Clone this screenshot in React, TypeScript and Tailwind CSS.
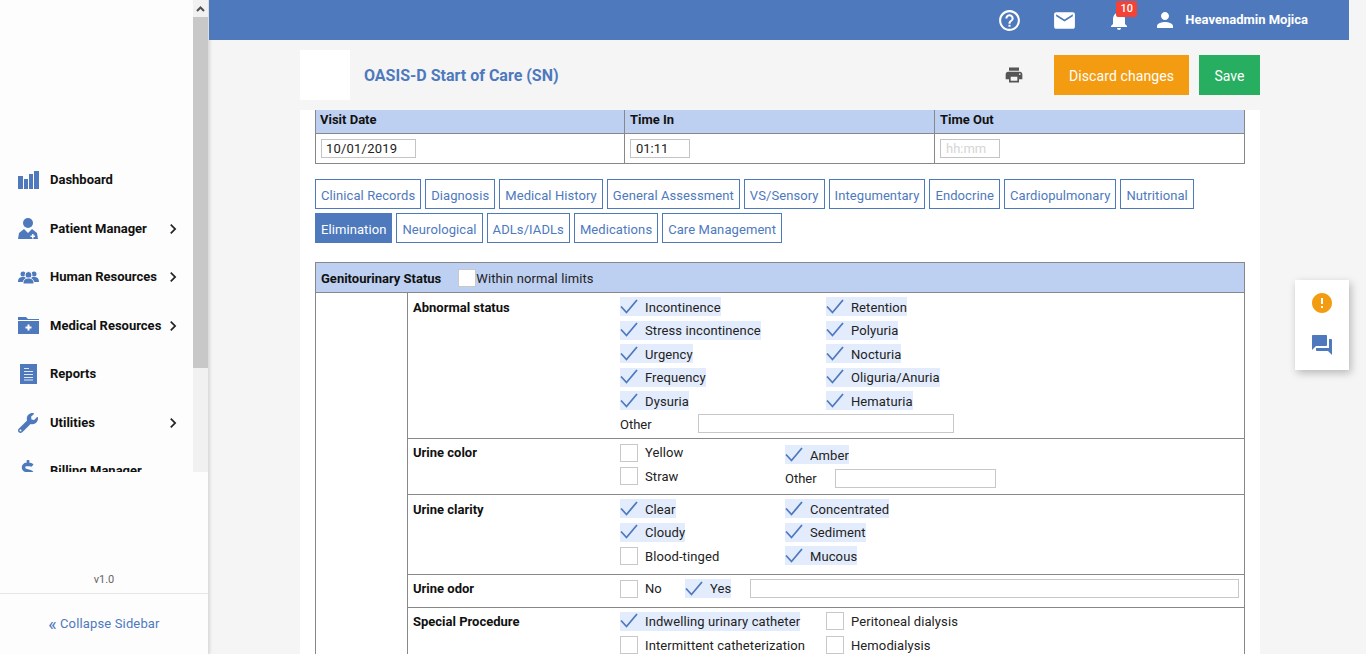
import { FaDollarSign, FaWrench } from "react-icons/fa";
import {
  MdChevronRight,
  MdEmail,
  MdError,
  MdHelpOutline,
  MdNotifications,
  MdPerson,
  MdPrint,
  MdQuestionAnswer,
} from "react-icons/md";
import type { ReactNode } from "react";

function BarsIcon() {
  return (
    <svg width="21" height="18" viewBox="0 0 21 18" fill="#4e79bd">
      <rect x="0" y="5" width="5" height="13" />
      <rect x="6" y="8" width="4" height="10" />
      <rect x="11" y="3" width="4" height="15" />
      <rect x="16" y="0" width="5" height="18" />
    </svg>
  );
}

function DoctorIcon() {
  return (
    <svg width="20" height="21" viewBox="0 0 20 21" fill="#4e79bd">
      <circle cx="10" cy="5" r="5" />
      <path d="M6 11l4 4 4-4 5 4 1 6H0l1-6z" />
      <path d="M14 16h1.500v1.500H17V19h-1.500v1.500H14V19h-1.500v-1.500H14z" fill="#fff" />
    </svg>
  );
}

function TeamIcon() {
  return (
    <svg width="21" height="13" viewBox="0 0 21 13" fill="#4e79bd">
      <circle cx="5" cy="3" r="2.500" />
      <circle cx="16" cy="3" r="2.500" />
      <path d="M0 11c0-4 2-5 5-5s5 1 5 5zM11 11c0-4 2-5 5-5s5 1 5 5z" />
      <circle cx="10.500" cy="4" r="3.500" stroke="#fff" />
      <path d="M5 13c0-4 2-6 5.500-6S16 9 16 13z" stroke="#fff" />
    </svg>
  );
}

function FolderIcon() {
  return (
    <svg width="21" height="17" viewBox="0 0 21 17" fill="#4e79bd">
      <path d="M0 0h8l2 2h11v1H0zM0 4h21v13H0z" />
      <path d="M9.500 7.500h2v2h2v2h-2v2h-2v-2h-2v-2h2z" fill="#fff" />
    </svg>
  );
}

function ReportIcon() {
  return (
    <svg width="17" height="20" viewBox="0 0 17 20">
      <rect width="17" height="20" fill="#4e79bd" />
      <path d="M4 4.500h5M4 7.500h9M4 10.500h9M4 13.500h9M4 16h9" stroke="#dfe8f6" strokeWidth="1" />
    </svg>
  );
}

const navItems: { label: string; icon: ReactNode; arrow?: boolean }[] = [
  { label: "Dashboard", icon: <BarsIcon /> },
  { label: "Patient Manager", icon: <DoctorIcon />, arrow: true },
  { label: "Human Resources", icon: <TeamIcon />, arrow: true },
  { label: "Medical Resources", icon: <FolderIcon />, arrow: true },
  { label: "Reports", icon: <ReportIcon /> },
  { label: "Utilities", icon: <FaWrench size={20} />, arrow: true },
  { label: "Billing Manager", icon: <FaDollarSign size={22} /> },
];

const tabsRowOne = [
  "Clinical Records",
  "Diagnosis",
  "Medical History",
  "General Assessment",
  "VS/Sensory",
  "Integumentary",
  "Endocrine",
  "Cardiopulmonary",
  "Nutritional",
];

const tabsRowTwo = ["Elimination", "Neurological", "ADLs/IADLs", "Medications", "Care Management"];

function Sidebar() {
  return (
    <aside className="flex h-full w-[209px] shrink-0 flex-col border-r border-[#dddddd] bg-[#fdfdfd] shadow-[1px_0_3px_rgba(0,0,0,0.12)]">
      <div className="flex h-[472px] shrink-0">
        <nav className="w-[193px] overflow-hidden pt-[155.8px]">
          {navItems.map((item) => (
            <div key={item.label} className="flex h-[48.5px] items-center">
              <div className="flex w-[50px] shrink-0 justify-center pl-[8px] pr-[2px] text-[#4e79bd]">{item.icon}</div>
              <span className="flex-1 whitespace-nowrap text-[13px] font-bold text-[#111111]">{item.label}</span>
              {item.arrow && <MdChevronRight size={20} className="mr-[10px] shrink-0 text-[#222222]" />}
            </div>
          ))}
        </nav>
        <div className="flex w-[15px] shrink-0 flex-col bg-[#f1f1f1]">
          <div className="flex h-[17px] items-center justify-center text-[#505050]">
            <svg width="9" height="6" viewBox="0 0 9 6" fill="none" stroke="currentColor" strokeWidth="2">
              <path d="M1 5l3.500-3.500L8 5" />
            </svg>
          </div>
          <div className="h-[351px] bg-[#c8c8c8]" />
        </div>
      </div>
      <div className="flex flex-1 flex-col">
        <div className="mt-[101px] text-center text-[11px] leading-[14px] text-[#666666]">v1.0</div>
        <div className="mt-[6px] flex flex-1 items-center justify-center border-t border-[#e6e6e6] pb-[1px] text-[13px] tracking-[0.15px] text-[#4e79bd]">
          <span className="mr-[3px] text-[18px] leading-none">«</span>Collapse Sidebar
        </div>
      </div>
    </aside>
  );
}

function TopBar() {
  return (
    <header className="flex h-10 w-[1140px] shrink-0 items-center bg-[#4e79bd] text-white">
      <div className="ml-auto flex items-center">
        <MdHelpOutline size={25} />
        <MdEmail size={25} className="ml-[30px]" />
        <div className="relative ml-[30px] h-[24px] w-[24px]">
          <MdNotifications size={24} />
          <span className="absolute left-[9px] top-[-7px] flex h-[16px] w-[21px] items-center justify-center rounded-[2px] bg-[#f44336] text-[11px] font-medium">
            10
          </span>
        </div>
        <MdPerson size={24} className="ml-[22px]" />
        <span className="ml-[8px] mr-[41px] text-[13px] font-bold">Heavenadmin Mojica</span>
      </div>
    </header>
  );
}

function Check() {
  return (
    <svg width="18" height="18" viewBox="0 0 18 18" fill="none" stroke="#4e79bd" strokeWidth="1.800" className="shrink-0">
      <path d="M1 8.500l5.500 6L17 2" />
    </svg>
  );
}

function Option({ label, checked, width }: { label: string; checked?: boolean; width?: string }) {
  return (
    <div className={`flex h-[19px] items-center ${width ?? ""}`}>
      <div className={`flex h-[19px] items-center text-[13px] tracking-[0.1px] text-[#222222] ${checked ? "bg-[#e3ecfd]" : ""}`}>
        {checked ? <Check /> : <div className="h-[18px] w-[18px] shrink-0 border border-[#c8c8c8] bg-white" />}
        <span className="ml-[7px] whitespace-nowrap pt-[1px]">{label}</span>
      </div>
    </div>
  );
}

function OtherField({ inputClass, gapClass }: { inputClass: string; gapClass: string }) {
  return (
    <div className="flex items-center text-[13px] text-[#222222]">
      <span className={`pt-[2px] leading-[16px] ${gapClass}`}>Other</span>
      <div className={`h-[19px] border border-[#c8c8c8] bg-white ${inputClass}`} />
    </div>
  );
}

function Row({
  label,
  className,
  labelClass,
  children,
}: {
  label: string;
  className: string;
  labelClass?: string;
  children: ReactNode;
}) {
  return (
    <div className={`flex border-b border-[#888888] ${className}`}>
      <div className={`w-[212px] shrink-0 pl-[5px] text-[13px] font-bold leading-[16px] text-[#111111] ${labelClass ?? "pt-[6px]"}`}>
        {label}
      </div>
      <div className="flex-1">{children}</div>
    </div>
  );
}

function OptionColumn({ items, className }: { items: [string, boolean][]; className: string }) {
  return (
    <div className={`flex shrink-0 flex-col gap-[4.500px] ${className}`}>
      {items.map(([label, checked]) => (
        <Option key={label} label={label} checked={checked} />
      ))}
    </div>
  );
}

function VisitTable() {
  const cell = "border-l border-[#888888] first:border-l-0";
  return (
    <div className="border-x border-b border-[#888888] text-[13px]">
      <div className="flex h-[24px] items-center border-b border-[#888888] bg-[#bed0f2] font-bold leading-[20px] text-[#111111]">
        <div className={`${cell} h-full w-[308px] pl-[4px]`}>Visit Date</div>
        <div className={`${cell} h-full w-[310px] pl-[5px]`}>Time In</div>
        <div className={`${cell} h-full flex-1 pl-[5px]`}>Time Out</div>
      </div>
      <div className="flex h-[29px] items-center text-[#222222]">
        <div className={`${cell} flex h-full w-[308px] items-center pl-[5px]`}>
          <div className="flex h-[19px] w-[95px] items-center border border-[#c4c4c4] pl-[4px] tracking-[0.2px]">10/01/2019</div>
        </div>
        <div className={`${cell} flex h-full w-[310px] items-center pl-[5px]`}>
          <div className="flex h-[19px] w-[60px] items-center border border-[#c4c4c4] pl-[5px]">01:11</div>
        </div>
        <div className={`${cell} flex h-full flex-1 items-center pl-[5px]`}>
          <div className="flex h-[19px] w-[60px] items-center border border-[#c4c4c4] pl-[5px] text-[#d5d5d5]">hh:mm</div>
        </div>
      </div>
    </div>
  );
}

function Tab({ label, active }: { label: string; active?: boolean }) {
  return (
    <div
      className={`flex h-[30px] items-center border border-[#4e79bd] px-[5px] pt-[4px] text-[13px] tracking-[0.085px] ${
        active ? "bg-[#4e79bd] text-white" : "bg-white text-[#4e79bd]"
      }`}
    >
      {label}
    </div>
  );
}

function GenitourinarySection() {
  return (
    <div className="mt-[19px] border-x border-t border-[#888888]">
      <div className="flex h-[30px] items-center border-b border-[#888888] bg-[#bed0f2] pl-[5px] text-[13px]">
        <span className="pt-[2px] font-bold text-[#111111]">Genitourinary Status</span>
        <div className="ml-[17px] h-[18px] w-[18px] border border-[#c8c8c8] bg-white" />
        <span className="pt-[2px] tracking-[0.1px] text-[#222222]">Within normal limits</span>
      </div>
      <div className="flex">
        <div className="w-[92px] shrink-0 border-r border-[#888888]" />
        <div className="flex-1">
          <Row label="Abnormal status" className="h-[146px]" labelClass="pt-[7px]">
            <div className="flex pt-[4.3px]">
              <OptionColumn
                className="w-[206px]"
                items={[
                  ["Incontinence", true],
                  ["Stress incontinence", true],
                  ["Urgency", true],
                  ["Frequency", true],
                  ["Dysuria", true],
                ]}
              />
              <OptionColumn
                className=""
                items={[
                  ["Retention", true],
                  ["Polyuria", true],
                  ["Nocturia", true],
                  ["Oliguria/Anuria", true],
                  ["Hematuria", true],
                ]}
              />
            </div>
            <div className="mt-[4px]">
              <OtherField gapClass="w-[78px]" inputClass="w-[256px]" />
            </div>
          </Row>
          <Row label="Urine color" className="h-[56px]">
            <div className="flex pt-[4px]">
              <OptionColumn
                className="w-[165px]"
                items={[
                  ["Yellow", false],
                  ["Straw", false],
                ]}
              />
              <div className="flex flex-col pt-[2.3px]">
                <Option label="Amber" checked />
                <div className="mt-[4.700px]">
                  <OtherField gapClass="w-[50px]" inputClass="w-[161px]" />
                </div>
              </div>
            </div>
          </Row>
          <Row label="Urine clarity" className="h-[80px]" labelClass="pt-[7px]">
            <div className="flex pt-[4.3px]">
              <OptionColumn
                className="w-[165px]"
                items={[
                  ["Clear", true],
                  ["Cloudy", true],
                  ["Blood-tinged", false],
                ]}
              />
              <OptionColumn
                className=""
                items={[
                  ["Concentrated", true],
                  ["Sediment", true],
                  ["Mucous", true],
                ]}
              />
            </div>
          </Row>
          <Row label="Urine odor" className="h-[33px]">
            <div className="flex items-center pt-[4px]">
              <Option label="No" width="w-[65px]" />
              <Option label="Yes" checked width="w-[65px]" />
              <div className="h-[19px] w-[489px] border border-[#c8c8c8] bg-white" />
            </div>
          </Row>
          <Row label="Special Procedure" className="h-[70px]">
            <div className="flex pt-[3.8px]">
              <OptionColumn
                className="w-[206px]"
                items={[
                  ["Indwelling urinary catheter", true],
                  ["Intermittent catheterization", false],
                ]}
              />
              <OptionColumn
                className=""
                items={[
                  ["Peritoneal dialysis", false],
                  ["Hemodialysis", false],
                ]}
              />
            </div>
          </Row>
        </div>
      </div>
    </div>
  );
}

export default function App() {
  return (
    <div className="relative flex h-[654px] w-[1366px] overflow-hidden bg-[#f5f5f5] font-['Roboto',sans-serif]">
      <Sidebar />
      <main className="flex min-w-0 flex-1 flex-col">
        <TopBar />
        <div className="ml-[91px] w-[960px] flex-1">
          <div className="flex h-[70px] items-center">
            <div className="h-[50px] w-[50px] bg-white" />
            <h1 className="ml-[14px] pt-[2px] text-[16px] font-bold text-[#4e79bd]">OASIS-D Start of Care (SN)</h1>
            <MdPrint size={20} className="ml-auto text-[#555555]" />
            <button className="ml-[30px] h-[40px] w-[135px] bg-[#f39c12] pt-[2px] text-[14px] tracking-[0.1px] text-white">
              Discard changes
            </button>
            <button className="ml-[10px] h-[40px] w-[61px] bg-[#27ae60] pt-[2px] text-[14px] text-white">Save</button>
          </div>
          <div className="h-[544px] overflow-hidden bg-white px-[15px]">
            <VisitTable />
            <div className="mt-[15px] flex flex-wrap gap-x-[4px] gap-y-[4px] pr-[40px]">
              {tabsRowOne.map((tab) => (
                <Tab key={tab} label={tab} />
              ))}
              {tabsRowTwo.map((tab) => (
                <Tab key={tab} label={tab} active={tab === "Elimination"} />
              ))}
            </div>
            <GenitourinarySection />
          </div>
        </div>
      </main>
      <div className="absolute left-[1295px] top-[280px] flex h-[90px] w-[54px] flex-col items-center justify-center gap-[18px] bg-white pb-[2px] shadow-[2px_3px_8px_rgba(0,0,0,0.25)]">
        <MdError size={24} className="text-[#f39c12]" />
        <MdQuestionAnswer size={24} className="text-[#4e79bd]" />
      </div>
    </div>
  );
}
